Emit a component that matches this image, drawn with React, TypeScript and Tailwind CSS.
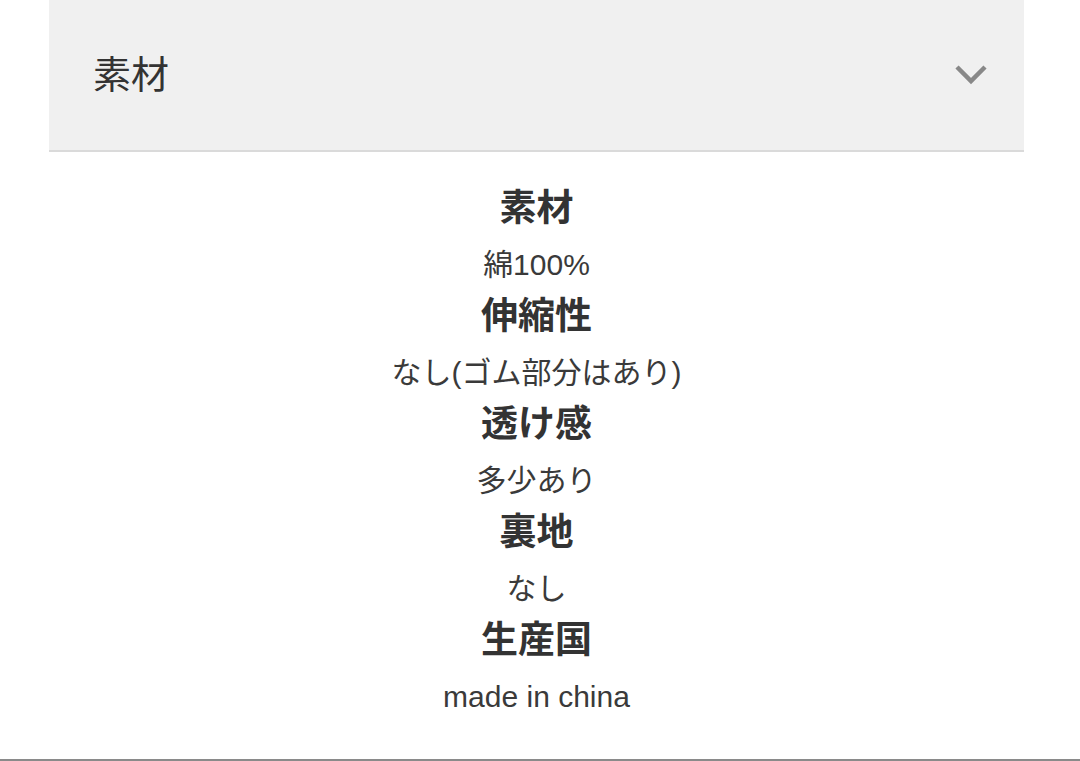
const specs = [
  { label: '素材', value: '綿100%' },
  { label: '伸縮性', value: 'なし(ゴム部分はあり)' },
  { label: '透け感', value: '多少あり' },
  { label: '裏地', value: 'なし' },
  { label: '生産国', value: 'made in china' },
];

export default function App() {
  return (
    <div
      className="w-[1080px] h-[761px] bg-white flex flex-col overflow-hidden"
      style={{ fontFamily: '"Liberation Sans", "Noto Sans CJK JP", sans-serif' }}
    >
      <div className="ml-[49px] mr-[56px] flex-1 flex flex-col">
        {/* Accordion header */}
        <div className="h-[152px] bg-[#f0f0f0] border-b-2 border-[#dadada] flex items-center justify-between pl-[44px] pr-[36px]">
          <span className="text-[38px] text-[#333]">素材</span>
          <svg width="34" height="22" viewBox="0 0 34 22" fill="none">
            <path d="M3 3 L17 17 L31 3" stroke="#888" strokeWidth="4.5" />
          </svg>
        </div>

        {/* Body */}
        <div className="pt-[30px] flex flex-col items-center text-center">
          {specs.map((s) => (
            <div key={s.label} className="flex flex-col items-center">
              <div className="text-[37px] leading-[54px] font-bold text-[#333]">{s.label}</div>
              <div className="pt-[3px] text-[30px] leading-[51px] text-[#3a3a3a]">{s.value}</div>
            </div>
          ))}
        </div>
      </div>
      <div className="h-[2px] bg-[#8a8a8a] shrink-0" />
    </div>
  );
}
